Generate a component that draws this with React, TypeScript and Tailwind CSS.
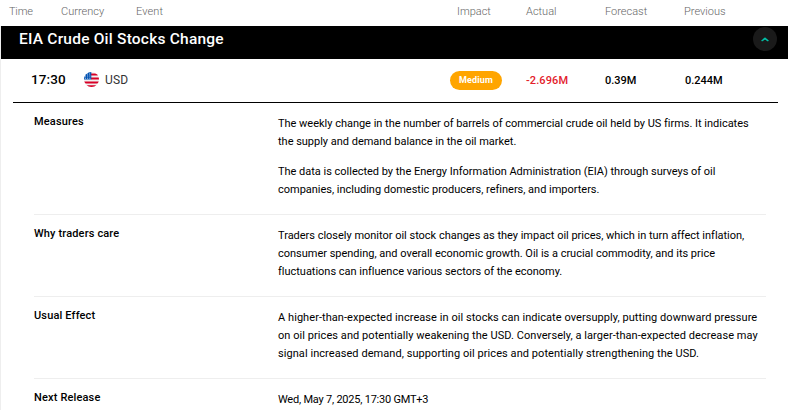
import React, { useState } from 'react';

interface Section {
    title: string;
    tracking: string;
    paragraphs: string[][];
}

const sections: Section[] = [
    {
        title: 'Measures',
        tracking: 'tracking-[-0.015px]',
        paragraphs: [
            [
                'The weekly change in the number of barrels of commercial crude oil held by US firms. It indicates',
                'the supply and demand balance in the oil market.',
            ],
            [
                'The data is collected by the Energy Information Administration (EIA) through surveys of oil',
                'companies, including domestic producers, refiners, and importers.',
            ],
        ],
    },
    {
        title: 'Why traders care',
        tracking: 'tracking-[-0.015px]',
        paragraphs: [
            [
                'Traders closely monitor oil stock changes as they impact oil prices, which in turn affect inflation,',
                'consumer spending, and overall economic growth. Oil is a crucial commodity, and its price',
                'fluctuations can influence various sectors of the economy.',
            ],
        ],
    },
    {
        title: 'Usual Effect',
        tracking: 'tracking-[0.06px]',
        paragraphs: [
            [
                'A higher-than-expected increase in oil stocks can indicate oversupply, putting downward pressure',
                'on oil prices and potentially weakening the USD. Conversely, a larger-than-expected decrease may',
                'signal increased demand, supporting oil prices and potentially strengthening the USD.',
            ],
        ],
    },
    {
        title: 'Next Release',
        tracking: 'tracking-[-0.22px]',
        paragraphs: [['Wed, May 7, 2025, 17:30 GMT+3']],
    },
];

const UsFlag = () => (
    <svg className="-mt-[3px] ml-[17px] h-[15px] w-[15px] shrink-0" viewBox="0 0 15 15">
        <clipPath id="flag">
            <circle cx="7.5" cy="7.5" r="7.5" />
        </clipPath>
        <g clipPath="url(#flag)">
            <path fill="#f0f0f0" d="M0 0h15v15H0z" />
            <path fill="#d80027" d="M7 1.6h8v2H7zM7 5.5h8v2H7zM0 9.4h15v2H0zM0 13.2h15v2H0z" />
            <path fill="#0052b4" d="M0 0h7.3v7.5H0z" />
            <path
                stroke="#f0f0f0"
                strokeWidth=".9"
                strokeDasharray=".9 1.3"
                d="M3 2h4M1 4h6M1 6.2h6"
            />
        </g>
    </svg>
);

const App = () => {
    const [open, setOpen] = useState(true);

    return (
        <main className="h-[410px] w-[788px] overflow-hidden bg-white font-['Roboto',sans-serif] text-black">
            <header className="flex h-[26px] items-center pl-[9px] pb-px text-[11px] font-light text-[#666666]">
                <span className="w-[52px] tracking-[-0.2px]">Time</span>
                <span className="w-[75px]">Currency</span>
                <span className="w-[321px] tracking-[0.1px]">Event</span>
                <span className="w-[69px]">Impact</span>
                <span className="w-[79px]">Actual</span>
                <span className="w-[79px]">Forecast</span>
                <span>Previous</span>
            </header>

            <div className="border-l border-[#eeeeee]">
                <div className="flex h-[33px] justify-between bg-black pl-[18px] pr-[11px] pt-px">
                    <h1 className="text-[15.5px] font-medium leading-6 tracking-[0.22px] text-white">
                        EIA Crude Oil Stocks Change
                    </h1>
                    <button
                        onClick={() => setOpen(!open)}
                        aria-label="Toggle details"
                        className="flex h-6 w-6 items-center justify-center rounded-full bg-[#1a1a1a]"
                    >
                        <svg width="8" height="5" viewBox="0 0 8 5" fill="none">
                            <path d="M.6 4 Q2 2.9 4 1.3 Q6 2.9 7.4 4" stroke="#00c2a8" strokeWidth="1.5" />
                        </svg>
                    </button>
                </div>

                <div className="ml-3 mr-[10px] flex h-11 items-center border-b border-black pl-[18px] text-[11px] font-medium">
                    <span className="-mt-[2px] w-[36px] text-[13.5px] tracking-[0.1px]">17:30</span>
                    <UsFlag />
                    <span className="-mt-px ml-[6px] w-[345px] text-[12px] font-normal tracking-[0.2px] text-[#333333]">USD</span>
                    <div className="w-[76px]">
                        <span className="flex h-[19px] w-[52px] items-center justify-center rounded-full bg-[#ffa500] text-[9px] font-bold tracking-[0.2px] text-white">
                            Medium
                        </span>
                    </div>
                    <span className="mt-px w-[79px] tracking-[0.1px] text-[#e3212b]">-2.696M</span>
                    <span className="mt-px w-[80px]">0.39M</span>
                    <span className="mt-px">0.244M</span>
                </div>

                {open && (
                    <div className="ml-[33px] mr-[22px] text-[11px] leading-[18px]">
                        {sections.map(section => (
                            <section
                                key={section.title}
                                className="flex border-b border-[#eeeeee] pb-[15px] pt-3"
                            >
                                <h2 className="-mt-[2px] w-[244px] shrink-0 font-medium tracking-[0.15px]">
                                    {section.title}
                                </h2>
                                <div className={`space-y-3 whitespace-nowrap ${section.tracking}`}>
                                    {section.paragraphs.map(lines => (
                                        <p key={lines[0]}>
                                            {lines.map(line => (
                                                <span key={line} className="block">{line}</span>
                                            ))}
                                        </p>
                                    ))}
                                </div>
                            </section>
                        ))}
                    </div>
                )}
            </div>
        </main>
    );
};

export default App;
